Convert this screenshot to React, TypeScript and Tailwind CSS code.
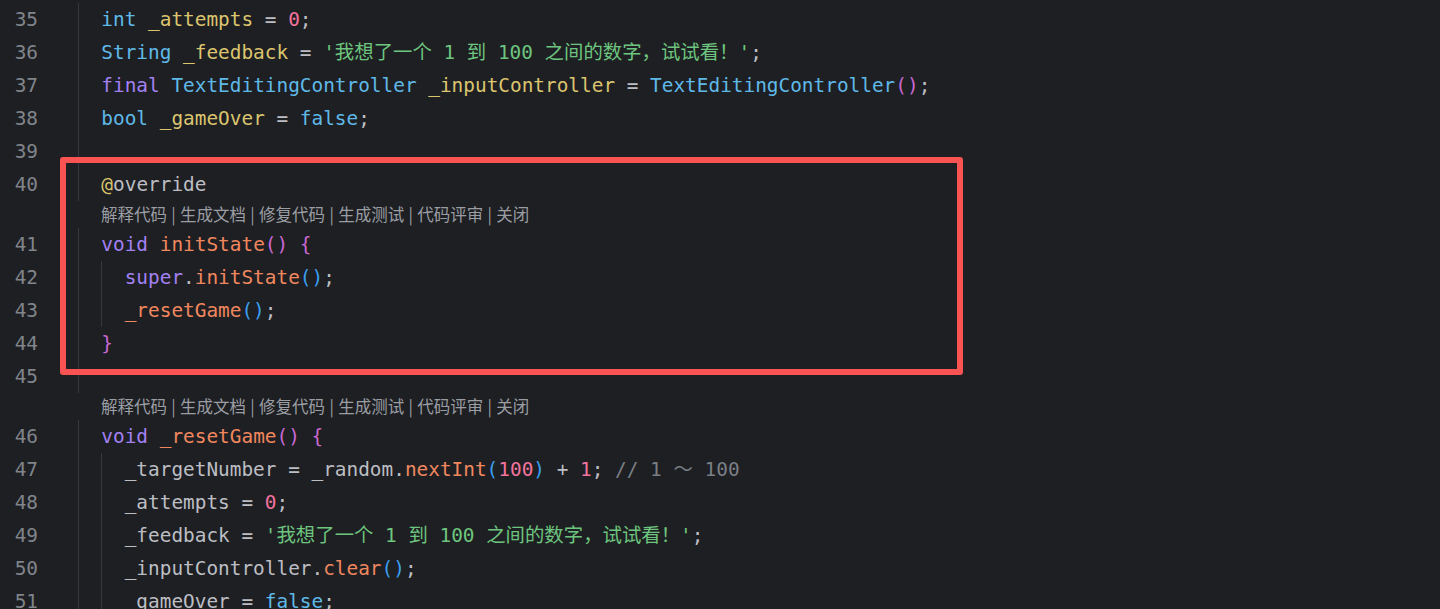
import React from 'react'

type Kind = 'p' | 'ty' | 'fd' | 'num' | 'str' | 'kw' | 'fn' | 'b1' | 'b2' | 'cm'

const kindClass: Record<Kind, string> = {
  p: 'text-[#bcbec4]',
  ty: 'text-[#5fb9e8]',
  fd: 'text-[#dcc56f]',
  num: 'text-[#f2739d]',
  str: 'text-[#6dc57f]',
  kw: 'text-[#a381f2]',
  fn: 'text-[#f0875f]',
  b1: 'text-[#c968d3]',
  b2: 'text-[#3a9ff0]',
  cm: 'text-[#7a7e85]',
}

type Tok = [string, Kind]
type Row = { n?: number; indent: number; toks?: Tok[]; lens?: boolean }

const msg = "'我想了一个 1 到 100 之间的数字，试试看！'"

const rows: Row[] = [
  { n: 35, indent: 1, toks: [['int', 'ty'], [' ', 'p'], ['_attempts', 'fd'], [' = ', 'p'], ['0', 'num'], [';', 'p']] },
  { n: 36, indent: 1, toks: [['String', 'ty'], [' ', 'p'], ['_feedback', 'fd'], [' = ', 'p'], [msg, 'str'], [';', 'p']] },
  {
    n: 37,
    indent: 1,
    toks: [
      ['final', 'kw'],
      [' ', 'p'],
      ['TextEditingController', 'ty'],
      [' ', 'p'],
      ['_inputController', 'fd'],
      [' = ', 'p'],
      ['TextEditingController', 'ty'],
      ['()', 'b1'],
      [';', 'p'],
    ],
  },
  { n: 38, indent: 1, toks: [['bool', 'ty'], [' ', 'p'], ['_gameOver', 'fd'], [' = ', 'p'], ['false', 'ty'], [';', 'p']] },
  { n: 39, indent: 1, toks: [] },
  { n: 40, indent: 1, toks: [['@', 'fd'], ['override', 'p']] },
  { lens: true, indent: 0 },
  { n: 41, indent: 1, toks: [['void', 'kw'], [' ', 'p'], ['initState', 'fn'], ['()', 'b1'], [' ', 'p'], ['{', 'b1']] },
  { n: 42, indent: 2, toks: [['super', 'kw'], ['.', 'p'], ['initState', 'fn'], ['()', 'b2'], [';', 'p']] },
  { n: 43, indent: 2, toks: [['_resetGame', 'fn'], ['()', 'b2'], [';', 'p']] },
  { n: 44, indent: 1, toks: [['}', 'b1']] },
  { n: 45, indent: 1, toks: [] },
  { lens: true, indent: 0 },
  { n: 46, indent: 1, toks: [['void', 'kw'], [' ', 'p'], ['_resetGame', 'fn'], ['()', 'b1'], [' ', 'p'], ['{', 'b1']] },
  {
    n: 47,
    indent: 2,
    toks: [
      ['_targetNumber = _random.', 'p'],
      ['nextInt', 'fn'],
      ['(', 'b2'],
      ['100', 'num'],
      [')', 'b2'],
      [' + ', 'p'],
      ['1', 'num'],
      [';', 'p'],
      [' // 1 ～ 100', 'cm'],
    ],
  },
  { n: 48, indent: 2, toks: [['_attempts = ', 'p'], ['0', 'num'], [';', 'p']] },
  { n: 49, indent: 2, toks: [['_feedback = ', 'p'], [msg, 'str'], [';', 'p']] },
  { n: 50, indent: 2, toks: [['_inputController.', 'p'], ['clear', 'fn'], ['()', 'b2'], [';', 'p']] },
  { n: 51, indent: 2, toks: [['_gameOver = ', 'p'], ['false', 'ty'], [';', 'p']] },
]

const lensItems = ['解释代码', '生成文档', '修复代码', '生成测试', '代码评审', '关闭']

const CodeLens = () => (
  <div className="flex h-[27px] items-center">
    <div className="w-[101px] shrink-0" />
    <div className="flex whitespace-pre text-[16.5px] text-[#9a9da3] [font-family:'Noto_Sans_CJK_SC','Noto_Sans',sans-serif]">
      {lensItems.map((item, i) => (
        <React.Fragment key={item}>
          {i > 0 && <span className="px-[0.6px]"> | </span>}
          <span>{item}</span>
        </React.Fragment>
      ))}
    </div>
  </div>
)

const CodeLine = ({ row }: { row: Row }) => (
  <div className="flex h-[33px]">
    <div className="flex w-[78px] shrink-0 items-center">
      <span className="w-[38px] text-right text-[#80848b]">{row.n}</span>
    </div>
    <div className="flex flex-1">
      {Array.from({ length: row.indent }).map((_, i) => (
        <span key={i} className="w-[2ch] shrink-0 border-l border-[#36383d]" />
      ))}
      <div className="flex items-center whitespace-pre">
        {row.toks?.map(([t, k], i) => (
          <span key={i} className={kindClass[k]}>
            {t}
          </span>
        ))}
      </div>
    </div>
  </div>
)

const App = () => {
  return (
    <div className="relative h-[609px] w-[1440px] overflow-hidden bg-[#1e1f22] pt-[3px] text-[19.4px] [font-family:'DejaVu_Sans_Mono','Noto_Sans_CJK_SC',monospace]">
      {rows.map((row, i) => (row.lens ? <CodeLens key={i} /> : <CodeLine key={i} row={row} />))}
      {/* annotation box drawn over the code */}
      <div className="absolute left-[60px] top-[157px] h-[218px] w-[903px] rounded-[3px] border-[6px] border-[#f95353]" />
    </div>
  )
}

export default App
